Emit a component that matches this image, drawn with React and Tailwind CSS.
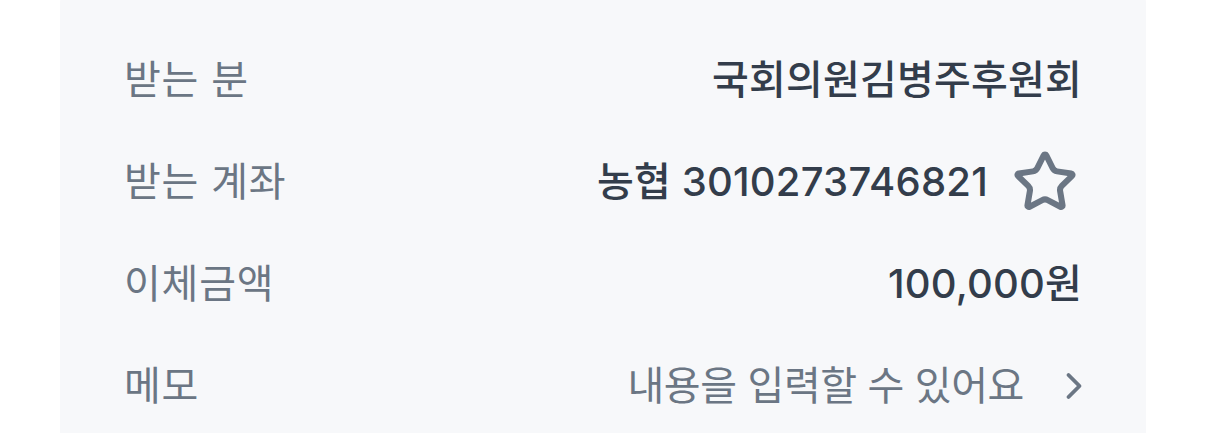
import { Star, ChevronRight } from "lucide-react";

const rows = [
  { label: "받는 분", value: "국회의원김병주후원회" },
  { label: "받는 계좌", value: "농협 3010273746821", star: true },
  { label: "이체금액", value: "100,000원" },
  { label: "메모", placeholder: "내용을 입력할 수 있어요", arrow: true },
];

const App = () => {
  return (
    <div
      className="h-[433px] w-full overflow-hidden bg-white"
      style={{ fontFamily: 'Inter, "Noto Sans CJK KR", sans-serif' }}
    >
      <div className="mx-[60px] -mt-6 rounded-[28px] bg-[#f7f8fa] px-[64px] pt-[53px] pb-10">
        {rows.map((row) => (
          <div
            key={row.label}
            className="flex h-[102px] items-center justify-between text-[40px] leading-none"
          >
            <span className="tracking-[0.8px] text-[#6b7684]">{row.label}</span>
            {row.placeholder ? (
              <div className="flex items-center gap-[28px] text-[#6b7684]">
                <span className="tracking-[-0.4px]">{row.placeholder}</span>
                <ChevronRight size={44} strokeWidth={2.1} className="mr-[-14px]" />
              </div>
            ) : (
              <div className="flex items-center gap-[24px]">
                <span className="font-medium tracking-[0.2px] text-[#333d4b]">
                  {row.value}
                </span>
                {row.star && (
                  <Star
                    size={66}
                    strokeWidth={2.2}
                    className="mr-[4px] text-[#6b7684]"
                  />
                )}
              </div>
            )}
          </div>
        ))}
      </div>
    </div>
  );
};

export default App;
